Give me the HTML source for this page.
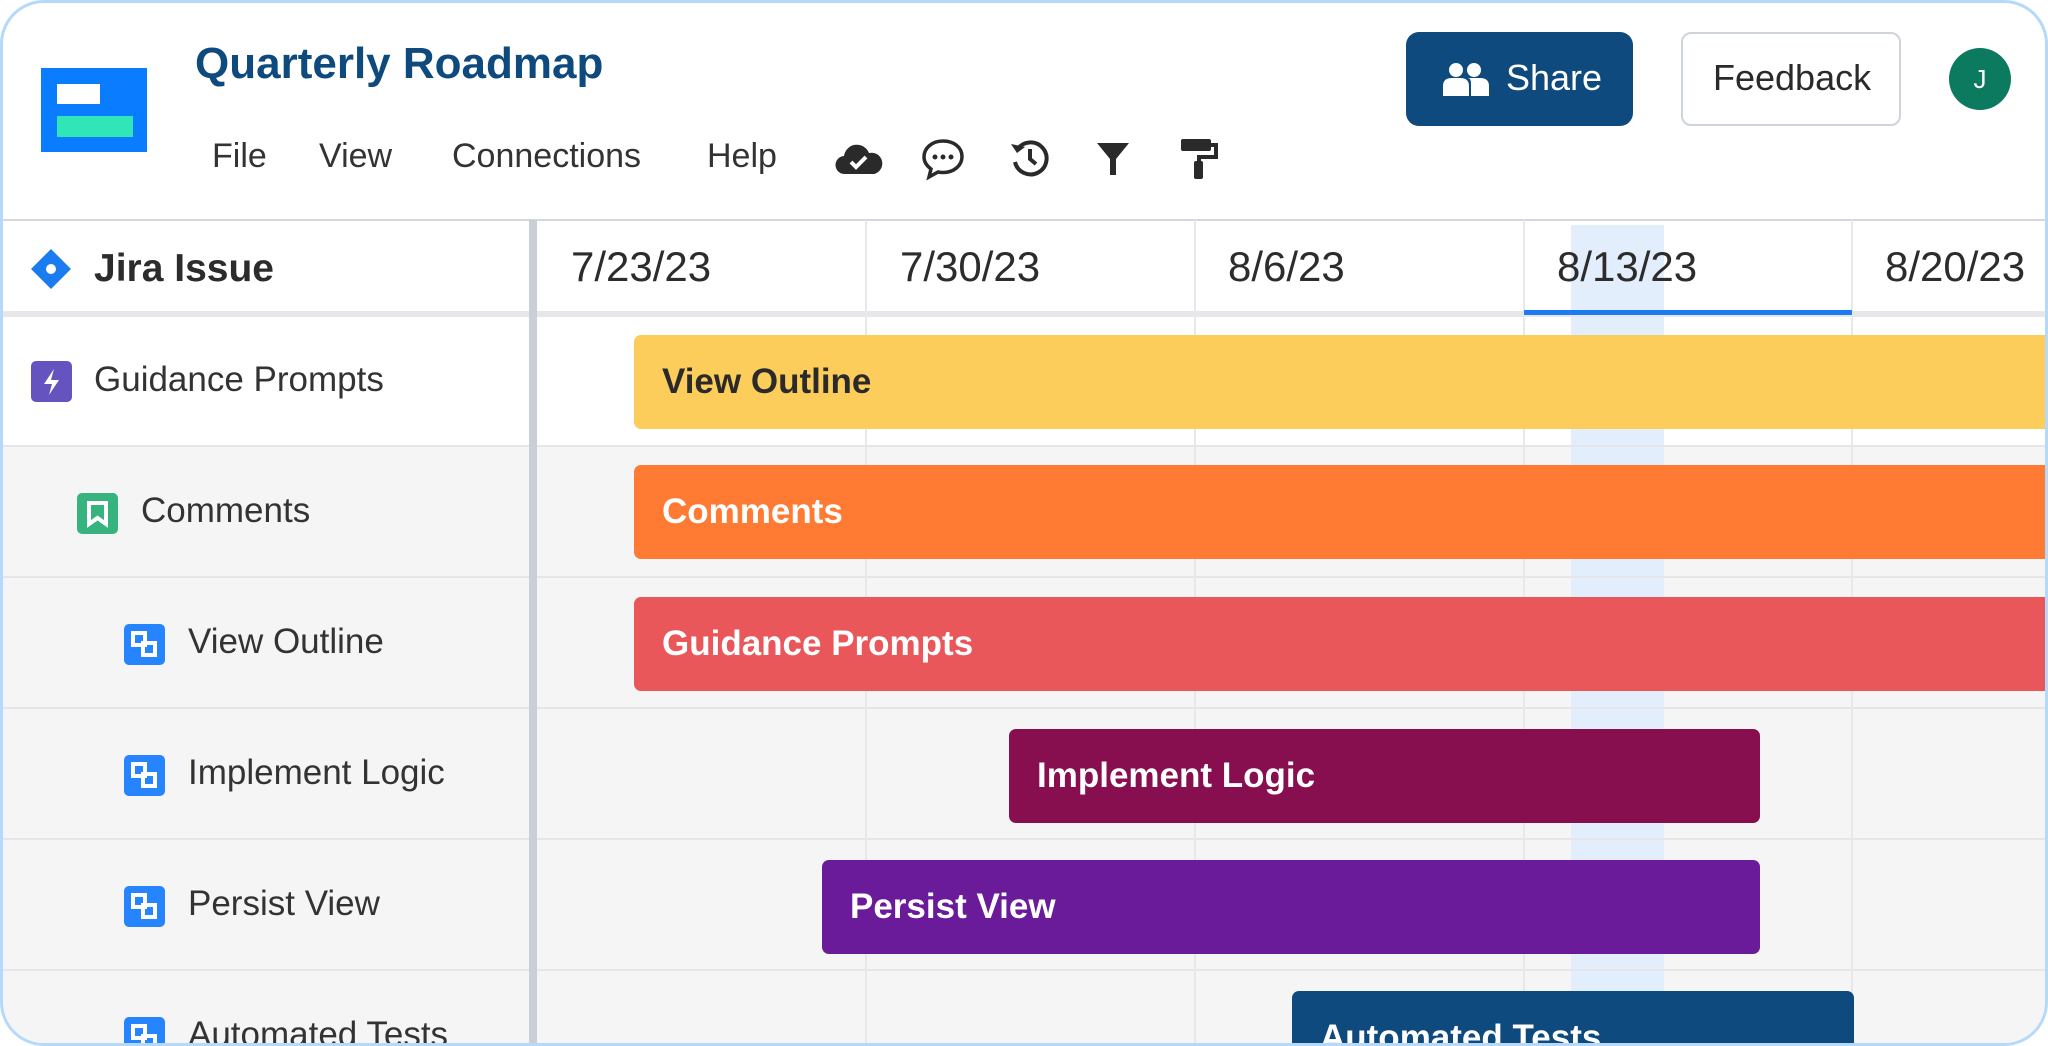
<!DOCTYPE html>
<html><head><meta charset="utf-8"><style>
*{margin:0;padding:0;box-sizing:border-box}
body{width:2048px;height:1046px;background:#fff;font-family:"Liberation Sans",sans-serif;overflow:hidden;position:relative}
.frame{position:absolute;left:0;top:0;width:2048px;height:1046px;border:3px solid #b5d9fb;border-radius:44px;overflow:hidden;background:#fff}
.abs{position:absolute}
.menu{font-size:34px;color:#333;top:134px}
.date{font-size:42px;color:#2c2c2c;top:240px}
.row{position:absolute;left:0;width:2048px;height:131px;border-bottom:2px solid #e4e6ea}
.lbl{position:absolute;font-size:35px;color:#333}
.ic{position:absolute;width:41px;height:41px;border-radius:5px}
.bar{position:absolute;height:94px;border-radius:7px;font-size:35px;font-weight:bold;color:#fff;padding-left:28px;line-height:94px}
.vl{position:absolute;top:217px;width:2px;height:829px;background:#e6e8ec}
</style></head><body><div class="frame">
<!-- header -->
<div class="abs" style="left:38px;top:65px;width:106px;height:84px;background:#0a7cff"></div>
<div class="abs" style="left:54px;top:81px;width:43px;height:20px;background:#fff"></div>
<div class="abs" style="left:54px;top:113px;width:76px;height:21px;background:#31e6b6"></div>
<div class="abs" style="left:192px;top:36px;font-size:44px;font-weight:bold;color:#0f4a7e">Quarterly Roadmap</div>
<div class="abs menu" style="left:209px">File</div>
<div class="abs menu" style="left:316px">View</div>
<div class="abs menu" style="left:449px">Connections</div>
<div class="abs menu" style="left:704px">Help</div>
<svg class="abs" style="left:832px;top:137px" width="48" height="38" viewBox="0 0 48 38"><path d="M10 34a9 9 0 0 1-1-18 13 13 0 0 1 25-3 10 10 0 0 1 5 21z" fill="#2a2a2a"/><path d="M16 22l5 5 10-10" stroke="#fff" stroke-width="4" fill="none"/></svg>
<svg class="abs" style="left:918px;top:134px" width="44" height="44" viewBox="0 0 44 44"><path d="M22 4C11 4 3 11 3 20c0 5 3 9 7 12l-2 8 9-5c2 .5 3 .5 5 .5 11 0 19-7 19-16S33 4 22 4z" fill="none" stroke="#2a2a2a" stroke-width="3.5"/><circle cx="14" cy="20" r="2.5" fill="#2a2a2a"/><circle cx="22" cy="20" r="2.5" fill="#2a2a2a"/><circle cx="30" cy="20" r="2.5" fill="#2a2a2a"/></svg>
<svg class="abs" style="left:1006px;top:135px" width="42" height="40" viewBox="0 0 42 40"><path d="M8 12A16 16 0 1 1 6 24" fill="none" stroke="#2a2a2a" stroke-width="4"/><path d="M2 6l6 9 8-6z" fill="#2a2a2a"/><path d="M21 11v10l6 5" fill="none" stroke="#2a2a2a" stroke-width="4"/></svg>
<svg class="abs" style="left:1092px;top:138px" width="36" height="36" viewBox="0 0 36 36"><path d="M2 2h32L21 18v16h-6V18z" fill="#2a2a2a"/></svg>
<svg class="abs" style="left:1176px;top:134px" width="40" height="42" viewBox="0 0 40 42"><rect x="2" y="2" width="30" height="12" rx="2" fill="#2a2a2a"/><path d="M32 8h5v12H20v6" fill="none" stroke="#2a2a2a" stroke-width="4"/><rect x="15" y="24" width="9" height="18" rx="2" fill="#2a2a2a"/></svg>
<div class="abs" style="left:1403px;top:29px;width:227px;height:94px;background:#0f4a7e;border-radius:13px"></div>
<svg class="abs" style="left:1440px;top:59px" width="46" height="34" viewBox="0 0 46 34"><circle cx="13" cy="8" r="7" fill="#fff"/><circle cx="31" cy="8" r="7" fill="#fff"/><path d="M0 34V24q0-8 9-8h8q9 0 9 8v10z" fill="#fff"/><path d="M28 34V22q0-6-3-6h12q9 0 9 8v10z" fill="#fff"/></svg>
<div class="abs" style="left:1503px;top:54px;font-size:36px;color:#fff">Share</div>
<div class="abs" style="left:1678px;top:29px;width:220px;height:94px;border:2px solid #cfd3da;border-radius:10px"></div>
<div class="abs" style="left:1710px;top:54px;font-size:36px;color:#2a2a2a">Feedback</div>
<div class="abs" style="left:1946px;top:45px;width:62px;height:62px;border-radius:50%;background:#0b7a5f;color:#fff;font-size:26px;text-align:center;line-height:62px">J</div>
<div class="abs" style="left:0;top:216px;width:2048px;height:2px;background:#d4d7dd"></div>
<!-- grid -->
<div class="abs" style="left:0;top:313px;width:2048px;height:733px;background:#f5f5f6"></div>
<div class="abs" style="left:0;top:313px;width:2048px;height:131px;background:#fff"></div>
<div class="abs" style="left:1568px;top:222px;width:93px;height:824px;background:#e3eefc"></div>
<div class="row" style="top:313px"></div><div class="row" style="top:444px"></div><div class="row" style="top:575px"></div><div class="row" style="top:706px"></div><div class="row" style="top:837px"></div>
<div class="abs" style="left:0;top:308px;width:2048px;height:6px;background:#e6e7ea"></div>
<div class="vl" style="left:862px"></div><div class="vl" style="left:1191px"></div><div class="vl" style="left:1520px"></div><div class="vl" style="left:1848px"></div>
<div class="abs" style="left:526px;top:217px;width:8px;height:829px;background:#c9ced8"></div>
<!-- header row -->
<svg class="abs" style="left:27px;top:245px" width="42" height="42" viewBox="0 0 42 42"><path d="M21 1l20 20-20 20L1 21z" fill="#1a7cf0"/><circle cx="21" cy="21" r="5" fill="#fff"/></svg>
<div class="abs" style="left:91px;top:244px;font-size:39px;font-weight:bold;color:#2c2c2c">Jira Issue</div>
<div class="abs date" style="left:568px">7/23/23</div>
<div class="abs date" style="left:897px">7/30/23</div>
<div class="abs date" style="left:1225px">8/6/23</div>
<div class="abs date" style="left:1554px">8/13/23</div>
<div class="abs date" style="left:1882px">8/20/23</div>
<div class="abs" style="left:1521px;top:307px;width:328px;height:5px;background:#1a7cf0"></div>
<!-- sidebar -->
<div class="ic" style="left:28px;top:358px;background:#6554c0"></div>
<svg class="abs" style="left:28px;top:358px" width="41" height="41" viewBox="0 0 41 41"><path d="M23 8l-10 15h8l-3 11 10-15h-8z" fill="#fff"/></svg>
<div class="lbl" style="left:91px;top:357px">Guidance Prompts</div>
<div class="ic" style="left:74px;top:490px;background:#36b37e"></div>
<svg class="abs" style="left:74px;top:490px" width="41" height="41" viewBox="0 0 41 41"><path d="M12 10h17v21l-8.5-6-8.5 6z" fill="none" stroke="#fff" stroke-width="4"/></svg>
<div class="lbl" style="left:138px;top:488px">Comments</div>
<svg width="0" height="0" style="position:absolute"><defs><g id="sub"><rect width="41" height="41" rx="5" fill="#2684ff"/><rect x="9" y="9" width="12" height="12" fill="none" stroke="#fff" stroke-width="4"/><rect x="19" y="19" width="12" height="12" fill="none" stroke="#fff" stroke-width="4"/></g></defs></svg>
<svg class="abs" style="left:121px;top:621px" width="41" height="41"><use href="#sub"/></svg>
<div class="lbl" style="left:185px;top:619px">View Outline</div>
<svg class="abs" style="left:121px;top:752px" width="41" height="41"><use href="#sub"/></svg>
<div class="lbl" style="left:185px;top:750px">Implement Logic</div>
<svg class="abs" style="left:121px;top:883px" width="41" height="41"><use href="#sub"/></svg>
<div class="lbl" style="left:185px;top:881px">Persist View</div>
<svg class="abs" style="left:121px;top:1014px" width="41" height="41"><use href="#sub"/></svg>
<div class="lbl" style="left:185px;top:1012px">Automated Tests</div>
<!-- bars -->
<div class="bar" style="left:631px;top:332px;width:1440px;background:#fdcd5b;color:#2a2a2a">View Outline</div>
<div class="bar" style="left:631px;top:462px;width:1440px;background:#ff7a33">Comments</div>
<div class="bar" style="left:631px;top:594px;width:1440px;background:#e9575a">Guidance Prompts</div>
<div class="bar" style="left:1006px;top:726px;width:751px;background:#870f4f">Implement Logic</div>
<div class="bar" style="left:819px;top:857px;width:938px;background:#6a1b9a">Persist View</div>
<div class="bar" style="left:1289px;top:988px;width:562px;background:#0f4a7e">Automated Tests</div>
</div></body></html>
